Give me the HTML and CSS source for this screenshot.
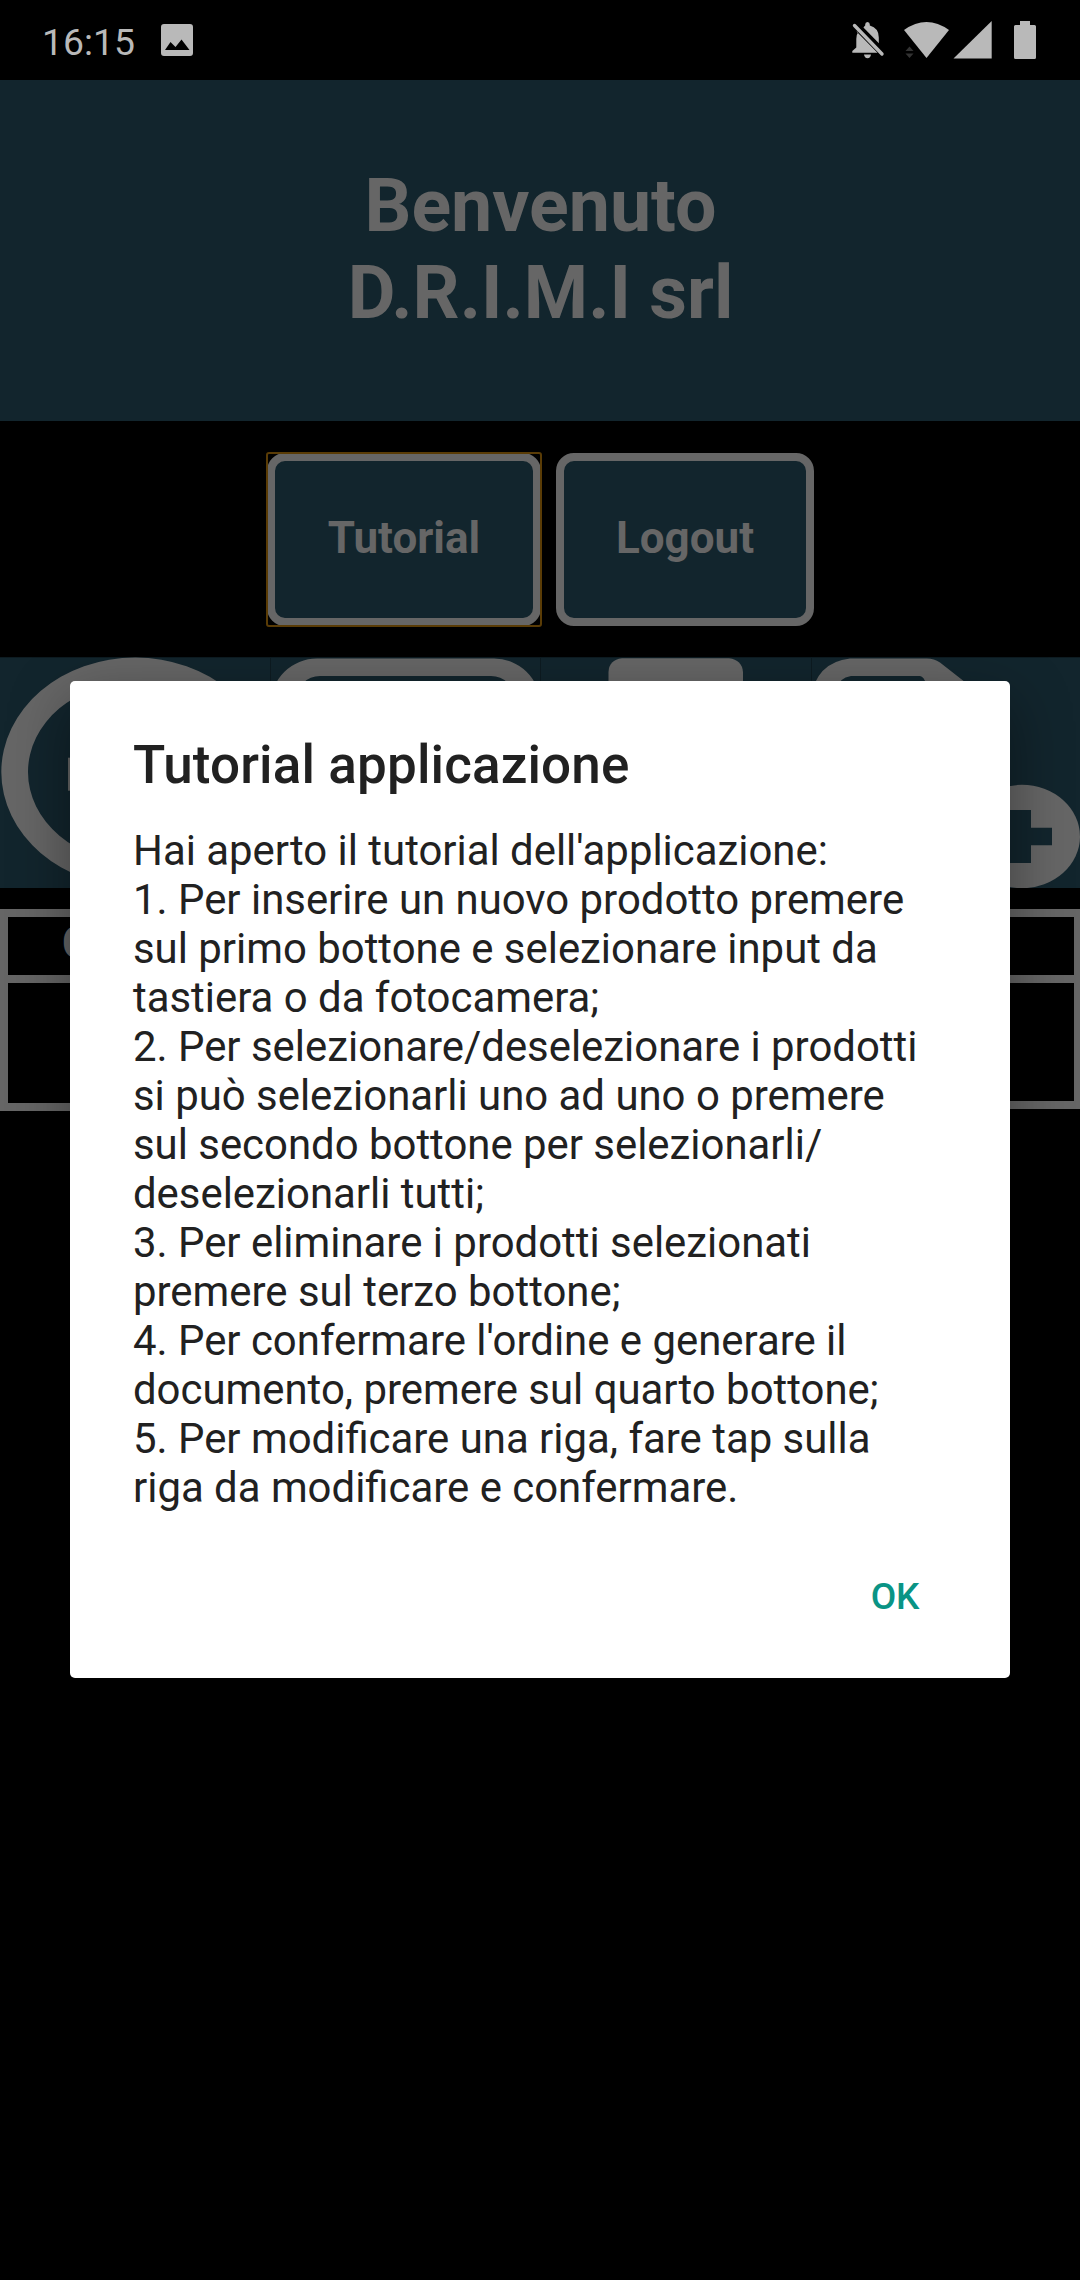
FILE: index.html
```html
<!DOCTYPE html>
<html lang="it">
<head>
<meta charset="utf-8">
<title>Tutorial applicazione</title>
<link rel="stylesheet" href="styles.css">
</head>
<body>
<div class="screen">
  <div class="status">
    <span class="time">16:15</span>
    <svg class="picture" width="34" height="34" viewBox="0 0 34 34"><path fill-rule="evenodd" d="M4 1H30Q33 1 33 4V30Q33 33 30 33H4Q1 33 1 30V4Q1 1 4 1ZM5 27H29.500L21.500 16.500L15.500 24L10.500 19Z"/></svg>
    <svg class="icons" width="190" height="44" viewBox="850 18 190 44">
      <path d="M863.500 27.500Q864.500 26 865.200 25.500V24.500A2.300 2.500 0 0 1 869.800 24.500V25.500Q878.800 28 878.800 37.500V44L862.800 28Z"/>
      <path d="M858.500 31.500Q856.300 34.500 856.300 39V47.500L852.300 51V52.800H877.500L856.500 31.500Z"/>
      <path d="M864 54.500H871Q870.500 58.200 867.500 58.200Q864.500 58.200 864 54.500Z"/>
      <path class="slash-gap" d="M857 26L882 51.500"/>
      <path class="slash" d="M854.500 25.500L882 54"/>
      <path d="M904 30Q926.500 14 949 30L926.500 58Z"/>
      <path class="faint" d="M905.500 51L909.500 46.500L913.500 51ZM905.500 53.500H913.500L909.500 58Z"/>
      <path d="M953.500 58.500L991.700 21V58.500Z"/>
      <path d="M1020 21H1030V25H1034.500Q1036 25 1036 26.500V57.500Q1036 59 1034.500 59H1015.500Q1014 59 1014 57.500V26.500Q1014 25 1015.500 25H1020Z"/>
    </svg>
  </div>
  <header class="hero">
    <h1>Benvenuto<br>D.R.I.M.I srl</h1>
  </header>
  <nav class="actions">
    <button class="btn focused">Tutorial</button>
    <button class="btn logout">Logout</button>
  </nav>
  <svg class="toolbar" width="1080" height="231" viewBox="0 657 1080 231">
    <path class="divider" d="M270.500 657V888M540.500 657V888M811.500 657V888M0 657.500H1080"/>
    <path fill-rule="evenodd" d="M1.300 772A134 114.500 0 0 1 269.300 772A134 114.500 0 0 1 1.300 772ZM28 772A107.300 90 0 0 0 242.600 772A107.300 90 0 0 0 28 772Z"/>
    <rect x="68" y="757.700" width="30" height="33"/>
    <path fill-rule="evenodd" d="M271 703.500A46 45 0 0 1 317 658.500H494A46 45 0 0 1 540 703.500V888H271ZM296 700A24 24 0 0 1 320 676H491A24 24 0 0 1 515 700V870H296Z"/>
    <path d="M608.500 690V672Q609 660 622 658.300H729Q742 660 743 672V690Z"/>
    <path fill-rule="evenodd" d="M810 700Q816 662 850 658.500H927Q934 658.500 940 662.500L970 686V700ZM836 690Q839 677.500 851 676H920Q924 676.500 926 684V690Z"/>
    <ellipse cx="1022" cy="836.500" rx="58" ry="51.700"/>
    <path class="plus" d="M1010 810H1031V827.700H1052V845.300H1031V863H1010Z"/>
  </svg>
  <main class="table">
    <div class="col left">
      <div class="cell head">C</div>
      <div class="cell"></div>
    </div>
    <div class="col right">
      <div class="cell head"></div>
      <div class="cell"></div>
    </div>
  </main>
  <section class="dialog">
    <h2>Tutorial applicazione</h2>
    <p>Hai aperto il tutorial dell'applicazione:<br>
1. Per inserire un nuovo prodotto premere<br>
sul primo bottone e selezionare input da<br>
tastiera o da fotocamera;<br>
2. Per selezionare/deselezionare i prodotti<br>
si può selezionarli uno ad uno o premere<br>
sul secondo bottone per selezionarli/<br>
deselezionarli tutti;<br>
3. Per eliminare i prodotti selezionati<br>
premere sul terzo bottone;<br>
4. Per confermare l'ordine e generare il<br>
documento, premere sul quarto bottone;<br>
5. Per modificare una riga, fare tap sulla<br>
riga da modificare e confermare.</p>
    <button class="ok">OK</button>
  </section>
</div>
</body>
</html>
```
FILE: styles.css
```css
* { box-sizing: border-box; }
body { margin: 0; background: #000; font-family: Roboto, sans-serif; }
h1, h2, p { margin: 0; }
button { font-family: inherit; margin: 0; }

.screen {
  position: relative;
  display: flex;
  flex-direction: column;
  width: 1080px;
  height: 2280px;
  background: #000;
  overflow: hidden;
}

.status {
  display: flex;
  align-items: center;
  height: 80px;
  padding: 0 40px 0 42px;
  color: #b9b9b9;
  fill: #b9b9b9;
}
.time { font-size: 37.3px; line-height: 44px; width: 118px; padding-top: 3px; }
.icons { margin-left: auto; }
.slash { stroke: #b9b9b9; stroke-width: 3.4; stroke-linecap: round; }
.slash-gap { stroke: #000; stroke-width: 7; }
.faint { fill: #333; }

.hero {
  display: flex;
  align-items: center;
  justify-content: center;
  height: 341px;
  background: #12252d;
}
.hero h1 {
  padding: 0 0 2px 1px;
  color: #666;
  font-size: 73.5px;
  font-weight: 700;
  line-height: 87px;
  text-align: center;
}

.actions {
  display: flex;
  justify-content: center;
  gap: 15px;
  height: 236px;
  padding: 32px 0 0 1px;
}
.btn {
  position: relative;
  width: 274px;
  height: 173px;
  padding: 0 0 3px;
  border: 8px solid #666;
  border-radius: 18px;
  background: #12252d;
  color: #666;
  font-size: 44px;
  font-weight: 700;
}
.logout { width: 258px; }
/* square focus ring around the rounded button */
.focused::after {
  content: "";
  position: absolute;
  inset: -9px;
  border: 2px solid #5a3c06;
  border-radius: 3px;
}

.toolbar { display: block; background: #12252d; fill: #666; }
.divider { stroke: #0d1b21; stroke-width: 1; }
.plus { fill: #12252d; }

.table { display: flex; align-items: flex-start; margin-top: 21px; }
.col { flex: 1; border: 8px solid #666; }
.left { border-right: 0; }
.right { border-left: 0; border-right-width: 6px; }
.cell { height: 120px; }
.right .cell { height: 118px; }
.col .head {
  height: 66px;
  padding-left: 54px;
  border-bottom: 8px solid #666;
  color: #666;
  font-size: 44px;
  font-weight: 700;
  line-height: 53px;
}

.dialog {
  position: absolute;
  left: 70px;
  top: 681px;
  display: flex;
  flex-direction: column;
  width: 939.5px;
  height: 996.5px;
  padding: 53px 63px 0;
  border-radius: 5px;
  background: #fff;
  color: #212121;
  box-shadow: 0 20px 60px rgba(0, 0, 0, .4);
}
.dialog h2 { font-size: 53px; font-weight: 500; line-height: 63px; letter-spacing: .13px; }
.dialog p { margin-top: 29px; font-size: 41.9px; line-height: 49px; white-space: nowrap; }
.ok {
  align-self: flex-end;
  margin: 63px 27px 0 0;
  padding: 0;
  border: 0;
  background: none;
  color: #0a9485;
  font-size: 37px;
  font-weight: 500;
  line-height: 44px;
}
```
